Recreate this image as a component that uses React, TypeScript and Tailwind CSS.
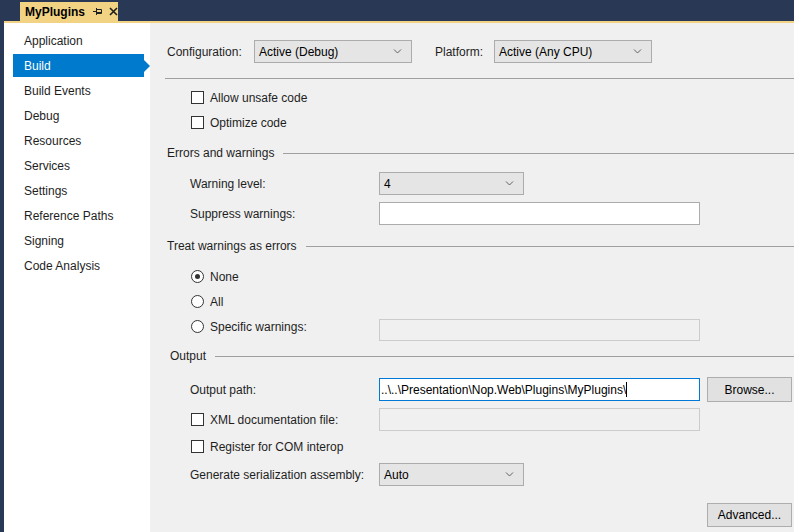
import React from "react";

// ── Small form controls ───────────────────────────────────────────────────────
function Chevron() {
  return (
    <svg width="9" height="5" viewBox="0 0 9 5" className="shrink-0">
      <path d="M1 0.5 L4.5 4 L8 0.5" fill="none" stroke="#606060" strokeWidth="1" />
    </svg>
  );
}

function Select({ value, width }: { value: string; width: string }) {
  return (
    <div
      className={`${width} h-[23px] flex items-center justify-between pl-[4px] pr-[9px] bg-[#e5e5e5] border border-[#acacac] text-[12px] text-black`}
    >
      <span>{value}</span>
      <Chevron />
    </div>
  );
}

function CheckBox() {
  return <span className="w-[13px] h-[13px] shrink-0 bg-white border border-[#333333]" />;
}

function Radio({ checked }: { checked?: boolean }) {
  return (
    <span className="w-[13px] h-[13px] shrink-0 rounded-full bg-white border border-[#333333] flex items-center justify-center">
      {checked && <span className="w-[5px] h-[5px] rounded-full bg-[#333333]" />}
    </span>
  );
}

function Button({ label, height = "h-[25px]" }: { label: string; height?: string }) {
  return (
    <div
      className={`w-[85px] ${height} flex items-center justify-center bg-[#e1e1e1] border border-[#adadad] text-[12px] text-black`}
    >
      {label}
    </div>
  );
}

function SectionHeader({ label, pl = "pl-[17px]" }: { label: string; pl?: string }) {
  return (
    <div className={`h-[24px] flex items-center ${pl} gap-[9px]`}>
      <span>{label}</span>
      <span className="flex-1 h-px bg-[#a0a0a0]" />
    </div>
  );
}

// ── Left navigation ───────────────────────────────────────────────────────────
const navItems = [
  "Application",
  "Build",
  "Build Events",
  "Debug",
  "Resources",
  "Services",
  "Settings",
  "Reference Paths",
  "Signing",
  "Code Analysis",
];

function Nav() {
  return (
    <div className="w-[146px] shrink-0 bg-white pt-[6px] text-[12px] text-[#1e1e1e]">
      {navItems.map((item) =>
        item === "Build" ? (
          <div key={item} className="h-[25px] flex items-start pl-[9px]">
            <div className="w-[131px] h-[23px] bg-[#007acc] text-white flex items-center pl-[11px]">
              {item}
            </div>
            <span className="mt-[6px] w-0 h-0 border-y-[6px] border-y-transparent border-l-[6px] border-l-[#007acc]" />
          </div>
        ) : (
          <div key={item} className="h-[25px] flex items-center pl-[20px] pb-px">
            {item}
          </div>
        )
      )}
    </div>
  );
}

// ── Build page ────────────────────────────────────────────────────────────────
function BuildPage() {
  return (
    <div className="flex-1 bg-[#f0f0f0] text-[12px] text-[#1e1e1e] flex flex-col">
      {/* Configuration / Platform */}
      <div className="mt-[17px] h-[23px] flex items-center pl-[17px]">
        <span className="w-[87px]">Configuration:</span>
        <Select value="Active (Debug)" width="w-[158px]" />
        <span className="ml-[23px] w-[59px]">Platform:</span>
        <Select value="Active (Any CPU)" width="w-[158px]" />
      </div>
      <div className="mt-[15px] ml-[15px] h-px bg-[#a0a0a0]" />

      {/* General */}
      <div className="mt-[6px] h-[25px] flex items-center pl-[41px] gap-[6px]">
        <CheckBox />
        <span>Allow unsafe code</span>
      </div>
      <div className="h-[25px] flex items-center pl-[41px] gap-[6px]">
        <CheckBox />
        <span>Optimize code</span>
      </div>

      {/* Errors and warnings */}
      <div className="mt-[6px]">
        <SectionHeader label="Errors and warnings" />
      </div>
      <div className="mt-[7px] h-[23px] flex items-center pl-[40px]">
        <span className="w-[189px]">Warning level:</span>
        <Select value="4" width="w-[145px]" />
      </div>
      <div className="mt-[7px] h-[23px] flex items-center pl-[40px]">
        <span className="w-[189px]">Suppress warnings:</span>
        <div className="w-[321px] h-[23px] bg-white border border-[#acacac]" />
      </div>

      {/* Treat warnings as errors */}
      <div className="mt-[9px]">
        <SectionHeader label="Treat warnings as errors" />
      </div>
      <div className="mt-[6px] h-[25px] flex items-center pl-[41px] gap-[6px]">
        <Radio checked />
        <span>None</span>
      </div>
      <div className="h-[25px] flex items-center pl-[41px] gap-[6px]">
        <Radio />
        <span>All</span>
      </div>
      <div className="h-[25px] flex items-center pl-[41px]">
        <Radio />
        <span className="ml-[6px] w-[169px]">Specific warnings:</span>
        <div className="mt-[7px] w-[321px] h-[22px] bg-[#f0f0f0] border border-[#cccccc]" />
      </div>

      {/* Output */}
      <div className="mt-[5px]">
        <SectionHeader label="Output" pl="pl-[20px]" />
      </div>
      <div className="mt-[9px] h-[25px] flex items-center pl-[40px]">
        <span className="w-[189px]">Output path:</span>
        <div className="w-[321px] h-[23px] bg-white border border-[#0078d7] flex items-center pl-[1px] text-black">
          <span>..\..\Presentation\Nop.Web\Plugins\MyPlugins\</span>
          <span className="w-px h-[15px] bg-black" />
        </div>
        <div className="ml-[7px]">
          <Button label="Browse..." />
        </div>
      </div>
      <div className="mt-[6px] h-[23px] flex items-center pl-[41px]">
        <CheckBox />
        <span className="ml-[6px] w-[169px]">XML documentation file:</span>
        <div className="w-[321px] h-[23px] bg-[#f0f0f0] border border-[#cccccc]" />
      </div>
      <div className="mt-[3px] h-[25px] flex items-center pl-[41px] gap-[6px]">
        <CheckBox />
        <span>Register for COM interop</span>
      </div>
      <div className="mt-[4px] h-[23px] flex items-center pl-[40px]">
        <span className="w-[189px]">Generate serialization assembly:</span>
        <Select value="Auto" width="w-[145px]" />
      </div>
      <div className="mt-[17px] flex pl-[557px]">
        <Button label="Advanced..." height="h-[24px]" />
      </div>
    </div>
  );
}

// ── Tab header ────────────────────────────────────────────────────────────────
function DocTab() {
  return (
    <div className="h-[19px] w-[98px] bg-[#f2d383] flex items-center pl-[5px] text-[12px] font-bold text-black">
      <span>MyPlugins</span>
      <svg width="10" height="9" viewBox="0 0 10 9" className="ml-[8px]">
        <path d="M0 4.5 H3 M3.5 1 V8" stroke="#1e1e1e" strokeWidth="1" fill="none" />
        <path d="M3.5 2.5 H8.5 V6.5 H3.5" stroke="#1e1e1e" strokeWidth="1" fill="none" />
        <path d="M3.5 5.5 H8.5" stroke="#1e1e1e" strokeWidth="1" />
      </svg>
      <svg width="9" height="9" viewBox="0 0 9 9" className="ml-[6px]">
        <path d="M1 1 L8 8 M8 1 L1 8" stroke="#1e1e1e" strokeWidth="1.6" />
      </svg>
    </div>
  );
}

export default function App() {
  return (
    <div className="w-[794px] h-[532px] bg-[#293955] flex flex-col overflow-hidden font-['Liberation_Sans',Arial,sans-serif]">
      <div className="h-[21px] pt-[2px] pl-[20px] shrink-0">
        <DocTab />
      </div>
      <div className="flex-1 flex flex-col pl-[4px] min-h-0">
        <div className="h-[2px] bg-[#f2d383] shrink-0" />
        <div className="flex-1 flex min-h-0">
          <Nav />
          <BuildPage />
        </div>
      </div>
    </div>
  );
}
